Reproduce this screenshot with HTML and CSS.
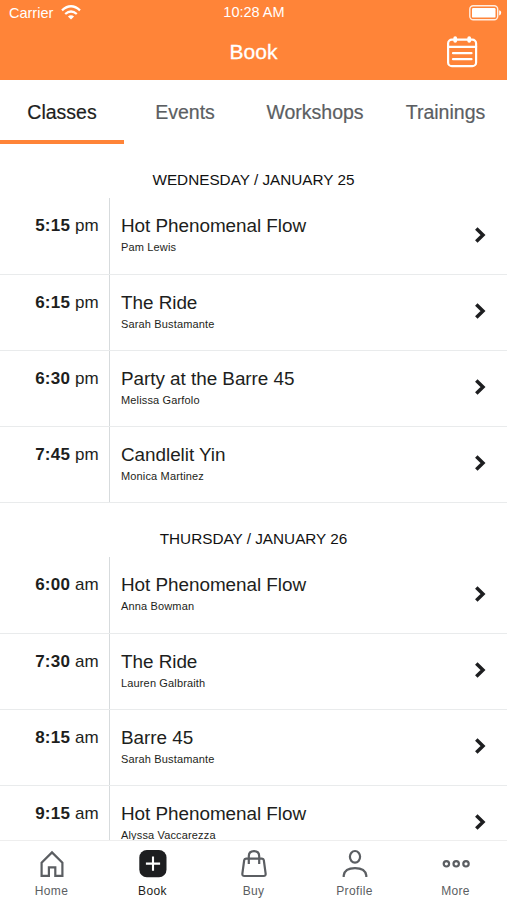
FILE: index.html
```html
<!DOCTYPE html>
<html lang="en">
<head>
<meta charset="utf-8">
<title>Book</title>
<link rel="stylesheet" href="styles.css">
</head>
<body>
<div class="app">
  <header class="header">
    <div class="status">
      <div class="carrier"><span>Carrier</span>
        <svg width="20" height="15" viewBox="0 0 20 15" fill="none" stroke="#fff" stroke-width="2.3"><path d="M1 5.4Q10-2.8 19 5.4M4.2 9Q10 3.9 15.8 9"/><path d="M6.9 11.5Q10 9.2 13.1 11.5L10 14.6Z" fill="#fff" stroke="none"/></svg>
      </div>
      <span class="clock">10:28 AM</span>
      <svg class="battery" width="33" height="16" viewBox="0 0 33 16"><rect x=".8" y=".8" width="27.9" height="14" rx="3.5" fill="none" stroke="#fff" stroke-opacity=".85" stroke-width="1.4"/><rect x="3" y="3" width="23.5" height="9.6" rx="1.2" fill="#fff"/><path d="M30.2 5.2q2 .4 2 2.6t-2 2.6Z" fill="#fff"/></svg>
    </div>
    <div class="titlebar">
      <h1>Book</h1>
      <svg class="calendar" width="32" height="32" viewBox="0 0 32 32" fill="none" stroke="#fff" stroke-width="2.2" stroke-linecap="round"><rect x="2.1" y="3.6" width="28" height="26.6" rx="3.8"/><path d="M2.1 10.8H30.1M7 17.2H25.5M7 23.2H25.5"/><path d="M9.2 2.2V4.8M23.2 2.2V4.8" stroke-width="3.8"/></svg>
    </div>
  </header>
  <nav class="tabs">
    <a class="tab active">Classes</a><a class="tab">Events</a><a class="tab">Workshops</a><a class="tab">Trainings</a>
  </nav>
  <main class="schedule">
    <section>
      <h2>WEDNESDAY / JANUARY 25</h2>
      <article class="row"><div class="time"><b>5:15</b> pm</div><div class="info"><h3>Hot Phenomenal Flow</h3><p>Pam Lewis</p></div><svg class="chevron" viewBox="0 0 12 18"><path d="M2.3 2.4L9 9L2.3 15.6"/></svg></article>
      <article class="row"><div class="time"><b>6:15</b> pm</div><div class="info"><h3>The Ride</h3><p>Sarah Bustamante</p></div><svg class="chevron" viewBox="0 0 12 18"><path d="M2.3 2.4L9 9L2.3 15.6"/></svg></article>
      <article class="row"><div class="time"><b>6:30</b> pm</div><div class="info"><h3>Party at the Barre 45</h3><p>Melissa Garfolo</p></div><svg class="chevron" viewBox="0 0 12 18"><path d="M2.3 2.4L9 9L2.3 15.6"/></svg></article>
      <article class="row"><div class="time"><b>7:45</b> pm</div><div class="info"><h3>Candlelit Yin</h3><p>Monica Martinez</p></div><svg class="chevron" viewBox="0 0 12 18"><path d="M2.3 2.4L9 9L2.3 15.6"/></svg></article>
    </section>
    <section>
      <h2>THURSDAY / JANUARY 26</h2>
      <article class="row"><div class="time"><b>6:00</b> am</div><div class="info"><h3>Hot Phenomenal Flow</h3><p>Anna Bowman</p></div><svg class="chevron" viewBox="0 0 12 18"><path d="M2.3 2.4L9 9L2.3 15.6"/></svg></article>
      <article class="row"><div class="time"><b>7:30</b> am</div><div class="info"><h3>The Ride</h3><p>Lauren Galbraith</p></div><svg class="chevron" viewBox="0 0 12 18"><path d="M2.3 2.4L9 9L2.3 15.6"/></svg></article>
      <article class="row"><div class="time"><b>8:15</b> am</div><div class="info"><h3>Barre 45</h3><p>Sarah Bustamante</p></div><svg class="chevron" viewBox="0 0 12 18"><path d="M2.3 2.4L9 9L2.3 15.6"/></svg></article>
      <article class="row"><div class="time"><b>9:15</b> am</div><div class="info"><h3>Hot Phenomenal Flow</h3><p>Alyssa Vaccarezza</p></div><svg class="chevron" viewBox="0 0 12 18"><path d="M2.3 2.4L9 9L2.3 15.6"/></svg></article>
    </section>
  </main>
  <nav class="bottom">
    <a class="item"><svg viewBox="0 0 30 30"><path d="M4.6 26.8V13.6L15 3.4L25.4 13.6V26.8H18.3V18.4H11.9V26.8Z"/></svg><span>Home</span></a>
    <a class="item active"><svg viewBox="0 0 30 30"><rect x="1.3" y="1" width="27.2" height="27.2" rx="7.5" fill="#1d1e20" stroke="none"/><path d="M15 7.5V21.7M7.9 14.6H22.1" stroke="#fff" stroke-width="2.1"/></svg><span>Book</span></a>
    <a class="item"><svg viewBox="0 0 30 30"><path d="M7 9.6H23Q24.6 9.6 24.8 11.2L26.6 24.3Q27 27 24.5 27H5.5Q3 27 3.4 24.3L5.2 11.2Q5.4 9.6 7 9.6ZM9.8 15V7.2Q9.8 2.2 15 2.2T20.2 7.2V15"/></svg><span>Buy</span></a>
    <a class="item"><svg viewBox="0 0 30 30"><ellipse cx="15" cy="7.8" rx="5.1" ry="5.8"/><path d="M3.7 28V26.5Q4.8 19.2 15 19.2T26.3 26.5V28"/></svg><span>Profile</span></a>
    <a class="item"><svg viewBox="0 0 30 30"><circle cx="5.4" cy="14.8" r="2.7"/><circle cx="15.2" cy="14.8" r="2.7"/><circle cx="25" cy="14.8" r="2.7"/></svg><span>More</span></a>
  </nav>
</div>
</body>
</html>
```
FILE: styles.css
```css
* { box-sizing: border-box; }
body { margin: 0; background: #fff; color: #1d1e20; font-family: "Liberation Sans", Arial, sans-serif; }
h1, h2, h3, p { margin: 0; font-weight: 400; }
svg { display: block; }
.app { width: 507px; height: 900px; display: flex; flex-direction: column; overflow: hidden; }
.header { height: 80px; flex: none; background: #ff8438; color: #fff; }
.status { height: 25px; display: grid; grid-template-columns: 1fr auto 1fr; align-items: center; padding: 0 5px 0 9px; font-size: 14.5px; }
.carrier { display: flex; align-items: center; gap: 8px; }
.clock { font-size: 14.5px; margin: -2px 0 0 -3px; }
.battery { justify-self: end; margin-top: 1px; }
.titlebar { height: 53px; display: grid; grid-template-columns: 1fr auto 1fr; align-items: center; padding-right: 29px; padding-left: 29px; }
.titlebar h1 { grid-column: 2; font-size: 21px; line-height: 24px; -webkit-text-stroke: .3px #fff; }
.calendar { justify-self: end; }
.tabs { height: 64px; flex: none; display: grid; grid-template-columns: 124px 122px 138px 123px; }
.tab { display: flex; align-items: center; justify-content: center; font-size: 19.5px; color: #5b5e62; border-bottom: 4px solid transparent; padding-top: 5px; -webkit-text-stroke: .2px; }
.tab.active { color: #1d1e20; border-color: #ff8438; }
.schedule { flex: 1; min-height: 0; overflow: hidden; }
.schedule h2 { height: 54.45px; display: flex; align-items: center; justify-content: center; padding-top: 18px; font-size: 15.3px; color: #111; }
.row { height: 76.15px; display: grid; grid-template-columns: 110px 1fr auto; border-bottom: 1px solid #e9ebec; }
.time { border-right: 1px solid #d7dbdd; padding: 18px 10px 0 0; text-align: right; font-size: 17px; line-height: 20px; letter-spacing: .2px; }
.info { padding: 16px 0 0 11px; }
.info h3 { font-size: 18.9px; line-height: 24px; letter-spacing: -.04px; }
.info p { font-size: 11px; line-height: 14px; margin-top: 2px; letter-spacing: .15px; }
.chevron { width: 12px; height: 18px; align-self: center; margin: -2px 21px 0 0; fill: none; stroke: #1d1e20; stroke-width: 3.5; }
.bottom { height: 60px; flex: none; border-top: 1px solid #eee; background: #fff; display: flex; padding: 0 1px; }
.item { flex: 1; display: flex; flex-direction: column; align-items: center; padding-top: 8px; gap: 4px; font-size: 12px; line-height: 16px; letter-spacing: .35px; color: #5b5e62; }
.item svg { width: 30px; height: 30px; fill: none; stroke: #5b5e62; stroke-width: 2.2; }
.item.active { color: #1d1e20; }
```
